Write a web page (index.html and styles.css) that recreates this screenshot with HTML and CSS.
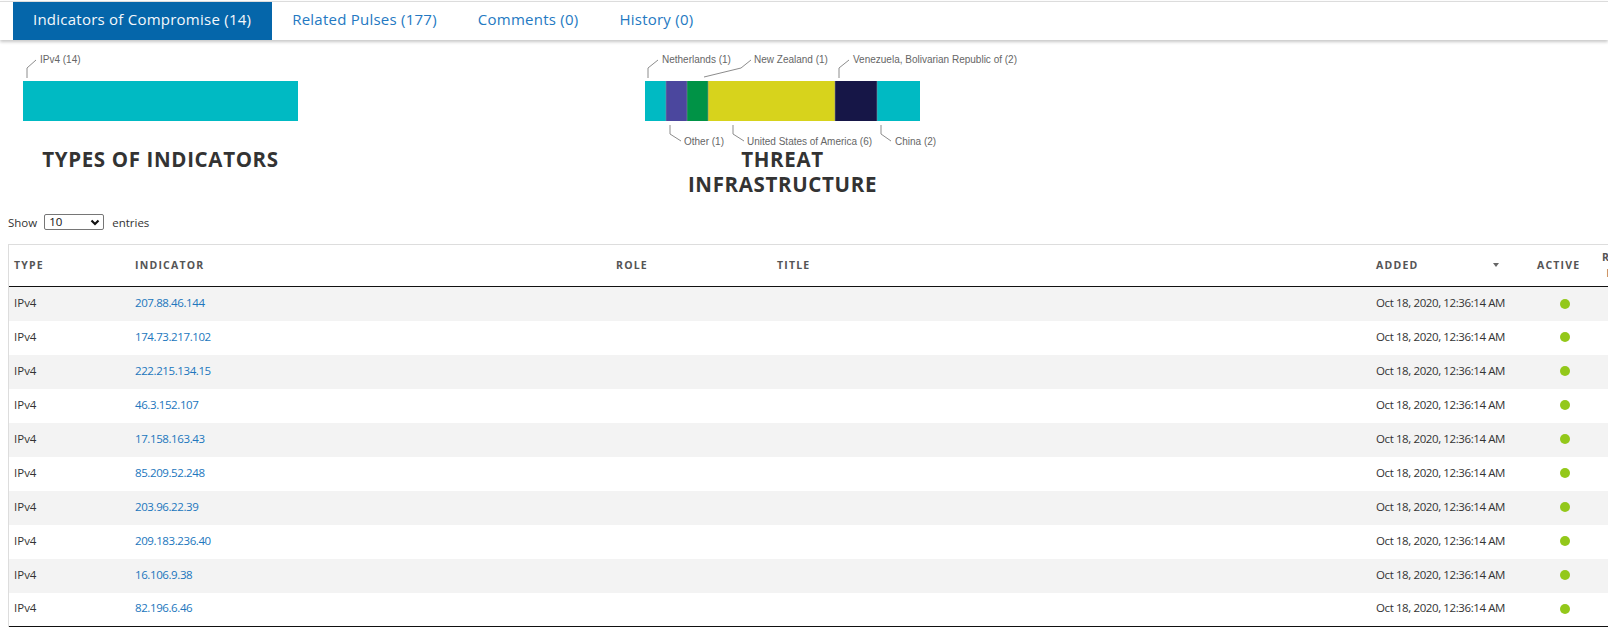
FILE: index.html
```html
<!DOCTYPE html>
<html lang="en">
<head>
<meta charset="utf-8">
<title>Indicators of Compromise</title>
<link rel="stylesheet" href="styles.css">
</head>
<body>
<nav class="tabs">
  <a class="tab tab-active" href="#">Indicators of Compromise (14)</a>
  <a class="tab" href="#">Related Pulses (177)</a>
  <a class="tab" href="#">Comments (0)</a>
  <a class="tab" href="#">History (0)</a>
</nav>

<section class="charts">
  <div class="chart">
    <svg class="chart-svg" width="622" height="102" viewBox="0 0 622 102">
      <rect x="15" y="36" width="275" height="40" fill="#00bac3"/>
      <polyline class="leader" points="19,33 19,23 28,15"/>
      <text class="lbl" x="32" y="17.5">IPv4 (14)</text>
    </svg>
    <h3 class="chart-title">TYPES OF INDICATORS</h3>
  </div>
  <div class="chart">
    <svg class="chart-svg" width="622" height="102" viewBox="0 0 622 102">
      <rect x="15" y="36" width="21" height="40" fill="#00bac3"/>
      <rect x="36" y="36" width="21" height="40" fill="#4b479e"/>
      <rect x="57" y="36" width="21" height="40" fill="#009346"/>
      <rect x="78" y="36" width="127" height="40" fill="#d7d31c"/>
      <rect x="205" y="36" width="42" height="40" fill="#161647"/>
      <rect x="247" y="36" width="43" height="40" fill="#00bac3"/>
      <g class="sep">
        <line x1="36" y1="36" x2="36" y2="76"/>
        <line x1="57" y1="36" x2="57" y2="76"/>
        <line x1="78" y1="36" x2="78" y2="76"/>
        <line x1="205" y1="36" x2="205" y2="76"/>
        <line x1="247" y1="36" x2="247" y2="76"/>
      </g>
      <polyline class="leader" points="18,33 18,23 28,15"/>
      <text class="lbl" x="32" y="17.5">Netherlands (1)</text>
      <polyline class="leader" points="74,32 111,23 121,15"/>
      <text class="lbl" x="124" y="17.5">New Zealand (1)</text>
      <polyline class="leader" points="209,33 209,23 219,15"/>
      <text class="lbl" x="223" y="17.5">Venezuela, Bolivarian Republic of (2)</text>
      <polyline class="leader" points="40,80 40,89 51,96"/>
      <text class="lbl" x="54" y="99.5">Other (1)</text>
      <polyline class="leader" points="103,80 103,89 114,96"/>
      <text class="lbl" x="117" y="99.5">United States of America (6)</text>
      <polyline class="leader" points="251,80 251,89 261,96"/>
      <text class="lbl" x="265" y="99.5">China (2)</text>
    </svg>
    <h3 class="chart-title">THREAT INFRASTRUCTURE</h3>
  </div>
</section>

<div class="length">
  <span>Show</span>
  <span class="select-wrap">
    <select class="select">
      <option>10</option>
      <option>25</option>
      <option>50</option>
      <option>100</option>
    </select>
    <svg class="chevron" width="10" height="7" viewBox="0 0 10 7"><polyline points="1.5,1.5 5,5 8.5,1.5" fill="none" stroke="#111" stroke-width="2.2"/></svg>
  </span>
  <span>entries</span>
</div>

<div class="table-wrap">
  <table class="ioc">
    <colgroup>
      <col class="c-type"><col class="c-ind"><col class="c-role"><col class="c-title"><col class="c-added"><col class="c-active"><col class="c-rel">
    </colgroup>
    <thead>
      <tr>
        <th>TYPE</th>
        <th>INDICATOR</th>
        <th>ROLE</th>
        <th>TITLE</th>
        <th><div class="th-sort"><span>ADDED</span><span class="sort-arrow"></span></div></th>
        <th>ACTIVE</th>
        <th class="th-center">RELATED PULSES</th>
      </tr>
    </thead>
    <tbody>
      <tr><td>IPv4</td><td><a class="ind" href="#">207.88.46.144</a></td><td></td><td></td><td class="num">Oct 18, 2020, 12:36:14 AM</td><td class="dot-cell"><span class="dot"></span></td><td></td></tr>
      <tr><td>IPv4</td><td><a class="ind" href="#">174.73.217.102</a></td><td></td><td></td><td class="num">Oct 18, 2020, 12:36:14 AM</td><td class="dot-cell"><span class="dot"></span></td><td></td></tr>
      <tr><td>IPv4</td><td><a class="ind" href="#">222.215.134.15</a></td><td></td><td></td><td class="num">Oct 18, 2020, 12:36:14 AM</td><td class="dot-cell"><span class="dot"></span></td><td></td></tr>
      <tr><td>IPv4</td><td><a class="ind" href="#">46.3.152.107</a></td><td></td><td></td><td class="num">Oct 18, 2020, 12:36:14 AM</td><td class="dot-cell"><span class="dot"></span></td><td></td></tr>
      <tr><td>IPv4</td><td><a class="ind" href="#">17.158.163.43</a></td><td></td><td></td><td class="num">Oct 18, 2020, 12:36:14 AM</td><td class="dot-cell"><span class="dot"></span></td><td></td></tr>
      <tr><td>IPv4</td><td><a class="ind" href="#">85.209.52.248</a></td><td></td><td></td><td class="num">Oct 18, 2020, 12:36:14 AM</td><td class="dot-cell"><span class="dot"></span></td><td></td></tr>
      <tr><td>IPv4</td><td><a class="ind" href="#">203.96.22.39</a></td><td></td><td></td><td class="num">Oct 18, 2020, 12:36:14 AM</td><td class="dot-cell"><span class="dot"></span></td><td></td></tr>
      <tr><td>IPv4</td><td><a class="ind" href="#">209.183.236.40</a></td><td></td><td></td><td class="num">Oct 18, 2020, 12:36:14 AM</td><td class="dot-cell"><span class="dot"></span></td><td></td></tr>
      <tr><td>IPv4</td><td><a class="ind" href="#">16.106.9.38</a></td><td></td><td></td><td class="num">Oct 18, 2020, 12:36:14 AM</td><td class="dot-cell"><span class="dot"></span></td><td></td></tr>
      <tr><td>IPv4</td><td><a class="ind" href="#">82.196.6.46</a></td><td></td><td></td><td class="num">Oct 18, 2020, 12:36:14 AM</td><td class="dot-cell"><span class="dot"></span></td><td></td></tr>
    </tbody>
  </table>
</div>
</body>
</html>
```

FILE: styles.css
```css
* { box-sizing: border-box; }

html, body {
  margin: 0;
  padding: 0;
  background: #fff;
  overflow: hidden;
}

body {
  font-family: "Open Sans", "Noto Sans", sans-serif;
  color: #333;
  width: 1608px;
}

/* Tabs */
.tabs {
  display: flex;
  margin-top: 1px;
  padding-left: 13px;
  border-top: 1px solid #dcdcdc;
  height: 39px;
  box-shadow: 0 2px 3px rgba(0, 0, 0, 0.22);
  position: relative;
  z-index: 1;
}

.tab {
  display: flex;
  align-items: center;
  height: 38px;
  padding: 0 21px 5px 20px;
  font-size: 15px;
  letter-spacing: 0.24px;
  color: #2479c2;
  text-decoration: none;
  white-space: nowrap;
}

.tab-active {
  background: #0566aa;
  color: #f4f8fc;
}

/* Charts */
.charts {
  display: flex;
  margin-top: 5px;
  padding-left: 8px;
}

.chart {
  width: 622px;
  display: flex;
  flex-direction: column;
}

.chart-svg {
  display: block;
  overflow: visible;
}

.leader {
  fill: none;
  stroke: #8c8c8c;
  stroke-width: 1;
}

.sep line {
  stroke: rgba(140, 140, 160, 0.55);
  stroke-width: 1;
}

.lbl {
  font-family: "Liberation Sans", Arial, sans-serif;
  font-size: 10px;
  fill: #666;
}

.chart-title {
  margin: 0 0 0 25px;
  width: 255px;
  text-align: center;
  font-size: 20.5px;
  line-height: 25px;
  font-weight: 700;
  letter-spacing: 0.65px;
  color: #333;
}

/* Length menu */
.length {
  display: flex;
  align-items: center;
  height: 16px;
  margin: 17px 0 0 8px;
  font-size: 11.5px;
  color: #333;
  gap: 7px;
}

.select-wrap {
  position: relative;
  display: inline-flex;
  margin-right: 1px;
}

.select {
  -webkit-appearance: none;
  appearance: none;
  width: 60px;
  height: 16px;
  border: 1px solid #767676;
  border-radius: 2px;
  background: #fff;
  font-family: "Open Sans", sans-serif;
  font-size: 11.5px;
  line-height: 14px;
  padding: 0 0 0 4px;
  color: #111;
}

.chevron {
  position: absolute;
  right: 4px;
  top: 5px;
  pointer-events: none;
}

/* Table */
.table-wrap {
  margin: 14px 0 0 8px;
  width: 1600px;
  overflow: hidden;
  border-left: 1px solid #dddddd;
}

.ioc {
  table-layout: fixed;
  border-collapse: collapse;
  width: 1652px;
  border-top: 1px solid #dddddd;
  border-bottom: 1px solid #111;
}

.c-type { width: 121px; }
.c-ind { width: 481px; }
.c-role { width: 161px; }
.c-title { width: 599px; }
.c-added { width: 161px; }
.c-active { width: 65px; }
.c-rel { width: 64px; }

.ioc thead tr {
  height: 42px;
  border-bottom: 1px solid #111;
}

.ioc th {
  text-align: left;
  vertical-align: middle;
  padding: 0 5px 2px 5px;
  font-size: 10.5px;
  font-weight: 700;
  letter-spacing: 1.2px;
  line-height: 16px;
  color: #555;
}

.ioc th.th-center {
  text-align: center;
}

.th-sort {
  display: flex;
  align-items: center;
  padding-right: 28px;
}

.sort-arrow {
  margin-left: auto;
  width: 0;
  height: 0;
  border-left: 3.5px solid transparent;
  border-right: 3.5px solid transparent;
  border-top: 4px solid #666;
}

.ioc tbody tr {
  height: 34px;
}

.ioc tbody tr:nth-child(odd) {
  background: #f3f3f3;
}

.ioc td {
  padding: 0 5px 3px 5px;
  font-size: 11.5px;
  color: #333;
  vertical-align: middle;
  white-space: nowrap;
}

.ind {
  color: #2176bd;
  text-decoration: none;
  letter-spacing: -0.4px;
}

.num {
  letter-spacing: -0.4px;
}

.dot-cell {
  text-align: center;
}

.dot {
  display: inline-block;
  width: 10px;
  height: 10px;
  border-radius: 50%;
  background: #93c81a;
  vertical-align: middle;
}
```
